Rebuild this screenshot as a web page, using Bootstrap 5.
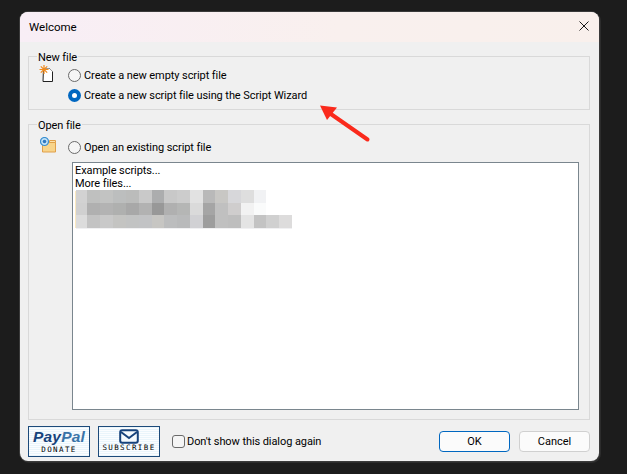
<!DOCTYPE html>
<html lang="en">
<head>
<meta charset="utf-8">
<title>Welcome</title>
<link rel="stylesheet" href="https://cdn.jsdelivr.net/npm/bootstrap@5.3.0/dist/css/bootstrap.min.css">
<style>
html,body{height:100%;overflow:hidden}
body{background:#1c1c1c;font-family:"Roboto","Noto Sans",sans-serif;font-size:11px;letter-spacing:-.08px;line-height:15px;color:#000}
.dlg{position:relative;width:579px;height:449px;margin:12px 0 0 20px;background:#f0f0f0;border-radius:8px;box-shadow:0 0 0 1px #3a3a3a,1px 1px 0 1px #2c2c2c;overflow:hidden}
.ttl{height:30px;padding:8px 9px 0;background:linear-gradient(90deg,#f8eef6 0%,#f9f0ee 55%,#f9f0ec 100%);font-size:11.500px;letter-spacing:0;line-height:15px}
.closex{position:absolute;right:10px;top:9px;display:block}
.dlgbody{padding:14px 9px 0 8px;height:419px}
.grp{position:relative;border:1px solid #d9d9d9}
.grp1{height:54px}
.grp2{height:296px;margin-top:14px}
.grplab{position:absolute;left:8px;top:-7px;background:#f0f0f0;padding:0 1px;line-height:15px}
.opt{display:flex;align-items:center;height:20px;white-space:nowrap}
.rad{width:13px;height:13px;border:1px solid #6a6a6a;border-radius:50%;background:#f5f5f5;margin-right:3px;flex:none}
.rad-on{border:none;background:#fff;box-shadow:inset 0 0 0 4px #0067c0}
.opts1{position:absolute;left:39px;top:8px}
.opts2{position:absolute;left:39px;top:12px}
.ic1{position:absolute;left:10px;top:8px}
.ic2{position:absolute;left:11px;top:12px}
.lst{position:absolute;left:43px;top:37px;width:507px;height:248px;background:#fff;border:1px solid #7a868e;padding:1px 2px;line-height:13px}
.blur{display:block}
.foot{height:31px;padding:0;margin-top:6px}
.dbtn{width:62px;height:31px;border:1px solid #1c4a7a;background:repeating-linear-gradient(0deg,#eaf5fb 0 1px,#fbfdff 1px 2px);display:flex;flex-direction:column;align-items:center;flex:none;overflow:hidden}
.ppl{font:italic 700 15.500px/17px "Liberation Sans",sans-serif;color:#17437c;margin-top:1px;margin-bottom:0;letter-spacing:.2px}
.ppl i{color:#3a74a8}
.btncap{font:400 7.500px/9px "DejaVu Sans Mono",monospace;color:#000;letter-spacing:1.400px;white-space:nowrap}
.mailic{display:block;margin-top:2px;margin-bottom:-1px}
.cb{width:13px;height:13px;border:1px solid #6a6a6a;border-radius:3px;background:#f5f5f5;flex:none;margin-left:12px;margin-right:2px}
.wgap{gap:9px}
.wbtn{width:71px;height:21px;line-height:18px;font-size:11px;background:#fbfbfb;border:1px solid #d0d0d0;border-radius:4px;text-align:center;padding:0;color:#000}
.wbtn-def{border:1px solid #0067c0}
.redarrow{position:absolute;left:295px;top:88px;display:block}
</style>
</head>
<body>
<div class="dlg">
  <div class="ttl">Welcome</div>
  <svg class="closex" width="10" height="10" viewBox="0 0 10 10"><path d="M.5.5l9 9M9.500.5l-9 9" stroke="#1a1a1a" stroke-width="1" fill="none"/></svg>
  <div class="dlgbody">
    <div class="grp grp1">
      <span class="grplab">New file</span>
      <svg class="ic1" width="16" height="18" viewBox="0 0 16 18"><path d="M4.500 3.500h6l3 3v10h-9.500z" fill="#fff" stroke="#222" stroke-width="1"/><path d="M4 3.500h6.500l3 3" fill="none" stroke="#999" stroke-width="1"/><path d="M5 0v9M.5 4.500h9M1.800 1.300l6.400 6.400M8.200 1.300l-6.400 6.400" stroke="#f08a1c" stroke-width="1.200"/></svg>
      <div class="opts1">
        <div class="opt"><span class="rad"></span>Create a new empty script file</div>
        <div class="opt"><span class="rad rad-on"></span>Create a new script file using the Script Wizard</div>
      </div>
    </div>
    <div class="grp grp2">
      <span class="grplab">Open file</span>
      <svg class="ic2" width="17" height="16" viewBox="0 0 17 16"><path d="M2.500 5.500h13v9.500h-13z" fill="#f8d48a" stroke="#e0a04a" stroke-width="1"/><path d="M9.500 3.500h6v2h-6z" fill="#fbe3ae" stroke="#e0a04a" stroke-width="1"/><circle cx="4.500" cy="4.500" r="4" fill="#bfe0f6" stroke="#3a8fd0" stroke-width="1.200"/><circle cx="4.500" cy="4.500" r="1.800" fill="#2f78c0"/></svg>
      <div class="opts2"><div class="opt"><span class="rad"></span>Open an existing script file</div></div>
      <div class="lst">
        <div>Example scripts...</div>
        <div>More files...</div>
        <svg class="blur" width="218" height="40" viewBox="0 0 222 41" preserveAspectRatio="none" shape-rendering="crispEdges">
          <rect x="0" y="1" width="1" height="38" fill="#fbe9c0"/>
          <rect x="1" y="0" width="11" height="13" fill="#d2d2d2"/><rect x="12" y="0" width="13" height="13" fill="#bfc0bf"/><rect x="25" y="0" width="14" height="13" fill="#c2c3c2"/><rect x="39" y="0" width="13" height="13" fill="#bcbebe"/><rect x="52" y="0" width="13" height="13" fill="#bbbcbb"/><rect x="65" y="0" width="13" height="13" fill="#c9c9c9"/><rect x="78" y="0" width="13" height="13" fill="#acadae"/><rect x="91" y="0" width="13" height="13" fill="#c8c8c8"/><rect x="104" y="0" width="13" height="13" fill="#cccccc"/><rect x="117" y="0" width="13" height="13" fill="#e2e2e2"/><rect x="130" y="0" width="13" height="13" fill="#b9b9b9"/><rect x="143" y="0" width="13" height="13" fill="#c8c7c4"/><rect x="156" y="0" width="13" height="13" fill="#d7d7da"/><rect x="169" y="0" width="13" height="13" fill="#dedede"/><rect x="182" y="0" width="13" height="13" fill="#f1f2f4"/>
          <rect x="1" y="13" width="11" height="13" fill="#d0d0d0"/><rect x="12" y="13" width="13" height="13" fill="#b0b0b0"/><rect x="25" y="13" width="14" height="13" fill="#b3b3b3"/><rect x="39" y="13" width="13" height="13" fill="#afb0af"/><rect x="52" y="13" width="13" height="13" fill="#a8a8a8"/><rect x="65" y="13" width="13" height="13" fill="#b2b2b2"/><rect x="78" y="13" width="13" height="13" fill="#989898"/><rect x="91" y="13" width="13" height="13" fill="#b0b0b0"/><rect x="104" y="13" width="13" height="13" fill="#b5b6b5"/><rect x="117" y="13" width="13" height="13" fill="#dadada"/><rect x="130" y="13" width="13" height="13" fill="#a5a5a5"/><rect x="143" y="13" width="13" height="13" fill="#c0c0c0"/><rect x="156" y="13" width="13" height="13" fill="#cfcdcd"/><rect x="169" y="13" width="13" height="13" fill="#f2f2f2"/><rect x="182" y="13" width="13" height="13" fill="#fafbfb"/>
          <rect x="1" y="26" width="11" height="13" fill="#dcdcdc"/><rect x="12" y="26" width="13" height="13" fill="#c3c3c3"/><rect x="25" y="26" width="14" height="13" fill="#c9c9c9"/><rect x="39" y="26" width="13" height="13" fill="#c4c4c2"/><rect x="52" y="26" width="13" height="13" fill="#c2c3c3"/><rect x="65" y="26" width="13" height="13" fill="#c2c3c5"/><rect x="78" y="26" width="13" height="13" fill="#c7c6c3"/><rect x="91" y="26" width="13" height="13" fill="#bcbdbe"/><rect x="104" y="26" width="13" height="13" fill="#b9babb"/><rect x="117" y="26" width="13" height="13" fill="#d1d1d4"/><rect x="130" y="26" width="13" height="13" fill="#9d9d9d"/><rect x="143" y="26" width="13" height="13" fill="#c0c0c0"/><rect x="156" y="26" width="13" height="13" fill="#bebebe"/><rect x="169" y="26" width="13" height="13" fill="#e4e4e4"/><rect x="182" y="26" width="13" height="13" fill="#c3c3c3"/><rect x="195" y="26" width="13" height="13" fill="#d0d0d0"/><rect x="208" y="26" width="13" height="13" fill="#dddcdc"/>
          <rect x="1" y="39" width="220" height="1" fill="#f0f0f2"/>
        </svg>
      </div>
    </div>
    <div class="foot d-flex align-items-center">
      <div class="dbtn"><span class="ppl">Pay<i>Pal</i></span><span class="btncap">DONATE</span></div>
      <div class="dbtn ms-2"><svg class="mailic" width="20" height="15" viewBox="0 0 20 15"><rect x="1.200" y="1.200" width="17.600" height="12.600" rx="2" fill="#f4fafe" stroke="#17437c" stroke-width="2"/><path d="M2 3l8 6 8-6" fill="none" stroke="#17437c" stroke-width="2"/></svg><span class="btncap">SUBSCRIBE</span></div>
      <span class="cb"></span><span class="text-nowrap">Don't show this dialog again</span>
      <div class="d-flex ms-auto wgap">
        <button type="button" class="wbtn wbtn-def">OK</button>
        <button type="button" class="wbtn">Cancel</button>
      </div>
    </div>
  </div>
  <svg class="redarrow" width="60" height="45" viewBox="0 0 60 45"><path d="M13 12L52.500 39.500" stroke="#fa2a1c" stroke-width="4" stroke-linecap="round" fill="none"/><path d="M5 5.500L22 7.500 12 20z" fill="#fa2a1c"/></svg>
</div>
<script src="https://cdn.jsdelivr.net/npm/bootstrap@5.3.0/dist/js/bootstrap.bundle.min.js"></script>
</body>
</html>
